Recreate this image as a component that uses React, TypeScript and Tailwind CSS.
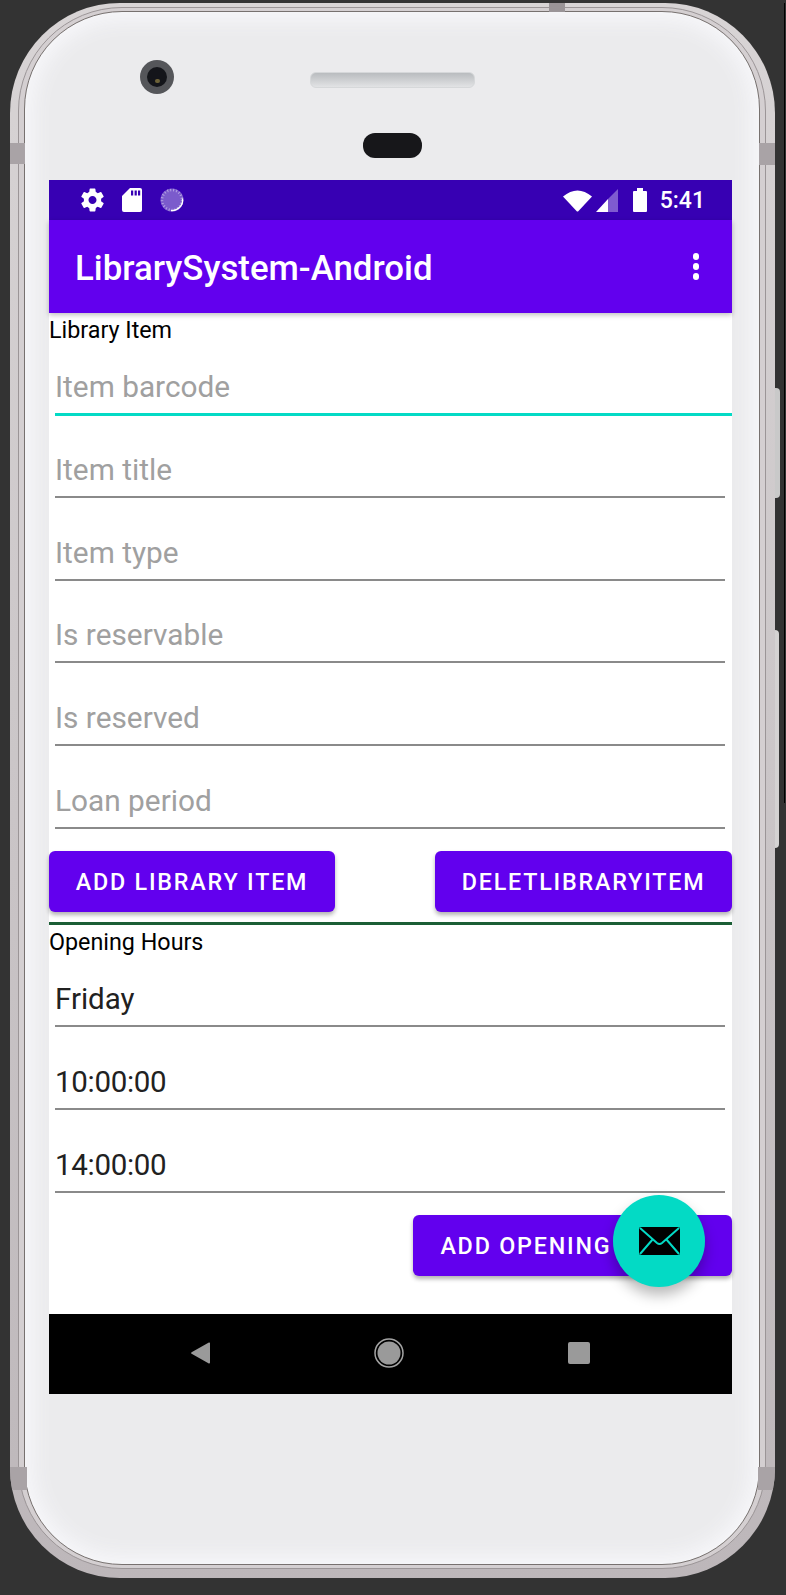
const libraryFields = ["Item title", "Item type", "Is reservable", "Is reserved", "Loan period"];
const settingsPath =
  "M19.43 12.98c.04-.32.07-.64.07-.98s-.03-.66-.07-.98l2.11-1.65c.19-.15.24-.42.12-.64l-2-3.46c-.12-.22-.39-.3-.61-.22l-2.49 1c-.52-.4-1.08-.73-1.69-.98l-.38-2.65C14.46 2.18 14.25 2 14 2h-4c-.25 0-.46.18-.49.42l-.38 2.65c-.61.25-1.17.59-1.69.98l-2.49-1c-.23-.09-.49 0-.61.22l-2 3.46c-.13.22-.07.49.12.64l2.11 1.65c-.04.32-.07.65-.07.98s.03.66.07.98l-2.11 1.65c-.19.15-.24.42-.12.64l2 3.46c.12.22.39.3.61.22l2.49-1c.52.4 1.08.73 1.69.98l.38 2.65c.03.24.24.42.49.42h4c.25 0 .46-.18.49-.42l.38-2.65c.61-.25 1.17-.59 1.69-.98l2.49 1c.23.09.49 0 .61-.22l2-3.46c.12-.22.07-.49-.12-.64l-2.11-1.65zM12 15.5c-1.93 0-3.5-1.57-3.5-3.5s1.57-3.5 3.5-3.5 3.5 1.57 3.5 3.5-1.57 3.5-3.5 3.5z";

function Field({ text, value, className }: { text: string; value?: boolean; className: string }) {
  return (
    <div className={`ml-[6px] mr-[7px] flex items-end border-b-2 border-[#8a8a8a] pb-[7px] ${className}`}>
      <span className={`leading-[38px] ${value ? "text-[29.5px] text-[#212121]" : "text-[29.8px] text-[#a0a0a0]"}`}>{text}</span>
    </div>
  );
}

function ActionButton({ label, className }: { label: string; className: string }) {
  return (
    <button className={`flex h-[61px] items-center justify-center rounded-[6px] bg-[#6200ee] pt-[2px] text-[23.3px] font-medium tracking-[1.8px] text-white shadow-[0_3px_4px_rgba(0,0,0,0.3)] ${className}`}>
      {label}
    </button>
  );
}

function StatusBar() {
  return (
    <div className="flex h-[40px] items-center justify-between bg-[#3700b3] pl-[32px] pr-[27px] text-white">
      <div className="flex items-center gap-[18px]">
        <svg viewBox="2 2 20 20" className="h-[24px] w-[23px]" fill="white">
          <path d={settingsPath} />
        </svg>
        <svg viewBox="0 0 20 24" className="h-[24px] w-[20px]">
          <path d="M8 0h10a2 2 0 0 1 2 2v20a2 2 0 0 1-2 2H2a2 2 0 0 1-2-2V8z" fill="white" />
          <path d="M9 2.500h2.200v5H9zM12.600 2.500h2.200v5h-2.200zM16 2.500h2.200v5H16z" fill="#3700b3" />
        </svg>
        <svg viewBox="0 0 24 24" className="h-[24px] w-[24px]" fill="none">
          <circle cx="12" cy="12" r="11.500" fill="#7b5bcc" />
          <circle cx="12" cy="12" r="10" stroke="#b5a3e4" strokeWidth="2.500" strokeDasharray="1 2" />
          <path d="M22.500 10.500a10.500 10.500 0 0 1-11.500 12" stroke="white" strokeWidth="1.300" />
        </svg>
      </div>
      <div className="flex items-center">
        <svg viewBox="0 0 29 24" className="h-[24px] w-[29px]" fill="white">
          <path d="M0 8.500Q14.500-3.500 29 8.500L15.500 23a1.400 1.400 0 0 1-2 0z" />
        </svg>
        <svg viewBox="0 0 22 23" className="ml-[4px] h-[23px] w-[22px]">
          <path d="M22 0v23H12V10z" fill="#7f5bd0" />
          <path d="M0 23 12 10v13z" fill="white" />
        </svg>
        <svg viewBox="0 0 14 24" className="ml-[15px] h-[24px] w-[14px]" fill="white">
          <path d="M4 0h6v3h3a1 1 0 0 1 1 1v19a1 1 0 0 1-1 1H1a1 1 0 0 1-1-1V4a1 1 0 0 1 1-1h3z" />
        </svg>
        <span className="ml-[13px] text-[23px] font-medium leading-none">5:41</span>
      </div>
    </div>
  );
}

function AppContent() {
  return (
    <div className="relative flex flex-1 flex-col">
      <p className="h-[32px] text-[23.3px] leading-[34px] text-black">Library Item</p>
      <div className="-mb-px ml-[6px] flex h-[71px] items-end border-b-[3px] border-[#03dac5] pb-[7px]">
        <span className="text-[29.8px] leading-[38px] text-[#a0a0a0]">Item barcode</span>
      </div>
      {libraryFields.map((name) => (
        <Field key={name} text={name} className="h-[82.8px]" />
      ))}
      <div className="mt-[22px] flex justify-between">
        <ActionButton label="ADD LIBRARY ITEM" className="w-[286px]" />
        <ActionButton label="DELETLIBRARYITEM" className="w-[297px]" />
      </div>
      <div className="mt-[10px] h-[3px] bg-[#1b5e35]" />
      <p className="h-[32px] text-[23.3px] leading-[34px] text-black">Opening Hours</p>
      <Field text="Friday" value className="h-[70px]" />
      <Field text="10:00:00" value className="h-[82.8px] tracking-[-0.3px]" />
      <Field text="14:00:00" value className="h-[82.8px] tracking-[-0.3px]" />
      <div className="mt-[22px] flex justify-end">
        <ActionButton label="ADD OPENING HOURS" className="w-[319px]" />
      </div>
      <div className="absolute left-[564px] top-[882px] flex h-[92px] w-[92px] items-center justify-center rounded-full bg-[#03dac5] shadow-[0_8px_14px_rgba(0,0,0,0.28)]">
        <svg viewBox="0 0 41 28" className="h-[28px] w-[41px]" fill="none">
          <rect width="41" height="28" rx="2" fill="black" />
          <path d="M1 1 18 16q2.500 2 5 0L40 1M1 27l13-15M40 27 27 12" stroke="#03dac5" strokeWidth="2" />
        </svg>
      </div>
    </div>
  );
}

function NavBar() {
  return (
    <div className="flex h-[80px] items-center justify-center gap-[164px] bg-black pb-[2px]">
      <svg viewBox="0 0 19 22" className="h-[22px] w-[19px]">
        <path d="M19 1.500v19a1 1 0 0 1-1.600.8L.6 11.800a1 1 0 0 1 0-1.600L17.400.7a1 1 0 0 1 1.600.8z" fill="#9a9a9a" />
      </svg>
      <svg viewBox="0 0 30 30" className="h-[30px] w-[30px]">
        <circle cx="15" cy="15" r="14" fill="none" stroke="#a3a3a3" strokeWidth="1.500" />
        <circle cx="15" cy="15" r="11.500" fill="#9a9a9a" />
      </svg>
      <div className="h-[22px] w-[22px] rounded-[2px] bg-[#9a9a9a]" />
    </div>
  );
}

export default function App() {
  return (
    <div className="relative h-[1595px] w-[786px] overflow-hidden bg-[#333333] pl-[10px] pt-[3px] font-['Roboto',sans-serif]">
      {/* side buttons sit behind the metal edge */}
      <div className="absolute left-[772px] top-[388px] h-[110px] w-[8px] rounded-r-[4px] bg-[#c9c9c9]" />
      <div className="absolute left-[772px] top-[630px] h-[218px] w-[7px] rounded-r-[4px] bg-[#d4d2d2]" />
      <div className="absolute left-[784px] top-[3px] h-[800px] w-px bg-black" />

      <div className="relative h-[1575px] w-[765px] overflow-hidden rounded-[110px] bg-gradient-to-b from-[#d8d4d5] to-[#bdb7ba] pb-[9px] pl-[8px] pr-[9px] pt-[4px]">
        <div className="h-full rounded-[104px] border border-[#9b9597] bg-[#d4cfd1] px-[5px] pb-[3px] pt-[3px]">
          <div className="h-full rounded-[98px] border border-[#77716f] bg-[#ebebed] shadow-[inset_0_0_20px_8px_#f7f7fa]">
            <div className="relative flex h-[168px] flex-col items-center pt-[60px]">
              <div className="absolute left-[115px] top-[48px] flex h-[34px] w-[34px] items-center justify-center rounded-full bg-[#55565a]">
                <div className="flex h-[20px] w-[20px] items-end justify-center rounded-full bg-[#14151a] pb-[4px]">
                  <div className="h-[4px] w-[5px] rounded-full bg-[#6d6238]" />
                </div>
              </div>
              <div className="h-[16px] w-[165px] rounded-[6px] border border-[#d6d8da] bg-gradient-to-b from-[#b9bcbf] to-[#e2e3e5]" />
              <div className="mt-[45px] h-[25px] w-[59px] rounded-[12px] bg-[#17171a]" />
            </div>
            <div className="ml-[24px] flex h-[1214px] w-[683px] flex-col bg-white">
              <StatusBar />
              <div className="z-10 flex h-[93px] items-center justify-between bg-[#6200ee] pl-[26px] pr-[33px] shadow-[0_2px_5px_rgba(0,0,0,0.25)]">
                <span className="pt-[3px] text-[34.8px] font-medium text-white">LibrarySystem-Android</span>
                <div className="flex flex-col gap-[3.500px]">
                  <span className="h-[6.500px] w-[6.500px] rounded-full bg-white" />
                  <span className="h-[6.500px] w-[6.500px] rounded-full bg-white" />
                  <span className="h-[6.500px] w-[6.500px] rounded-full bg-white" />
                </div>
              </div>
              <AppContent />
              <NavBar />
            </div>
          </div>
        </div>
        {/* darker antenna bands in the metal frame */}
        <div className="absolute left-0 top-[140px] h-[21px] w-[15px] bg-[#a9a3a6]" />
        <div className="absolute right-0 top-[140px] h-[22px] w-[16px] bg-[#a9a3a6]" />
        <div className="absolute left-0 top-[1464px] h-[23px] w-[17px] bg-[#a9a3a6]" />
        <div className="absolute right-0 top-[1464px] h-[23px] w-[17px] bg-[#a9a3a6]" />
        <div className="absolute left-[539px] top-0 h-[9px] w-[16px] bg-[#9a9497]" />
      </div>
    </div>
  );
}
